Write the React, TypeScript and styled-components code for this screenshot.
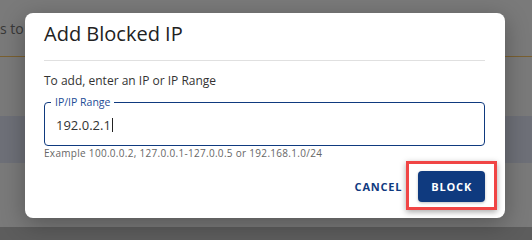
import React from 'react';
import styled, { createGlobalStyle } from 'styled-components';

const GlobalStyle = createGlobalStyle`
  html, body {
    margin: 0;
    padding: 0;
    width: 532px;
    height: 240px;
    overflow: hidden;
    background: #fff;
    font-family: 'Open Sans', 'Noto Sans', sans-serif;
  }
`;

const Page = styled.div`
  position: relative;
  width: 532px;
  height: 240px;
  overflow: hidden;
  background: #fff;
`;

const Intro = styled.div`
  height: 57px;
  padding-top: 19px;
  box-sizing: border-box;
  font-size: 14px;
  line-height: 20px;
  color: #777;
  white-space: nowrap;
  border-bottom: 1px solid #ffc864;
`;

const Row = styled.div<{ h: number; line?: string; band?: boolean; inset?: number }>`
  height: ${({ h }) => h}px;
  background: ${({ band }) => (band ? '#e5ebfa' : 'transparent')};
  box-shadow: ${({ line, inset = 0 }) =>
    line ? `inset ${inset}px -1px 0 0 #fff, inset 0 -1px 0 0 ${line}` : 'none'};
`;

const Footer = styled.div`
  height: 20px;
  background: #c2c2c2;
`;

const Overlay = styled.div`
  position: absolute;
  inset: 0;
  background: rgba(0, 0, 0, 0.52);
  display: flex;
  justify-content: flex-start;
  align-items: flex-start;
  padding: 13px 0 0 25px;
  box-sizing: border-box;
`;

const Dialog = styled.div`
  width: 480px;
  box-sizing: border-box;
  padding: 7px 20px 16px 19px;
  background: #fff;
  border-radius: 8px;
  box-shadow: 0 6px 24px rgba(0, 0, 0, 0.3);
`;

const Title = styled.h2`
  margin: 0;
  font-size: 20px;
  line-height: 28px;
  font-weight: 500;
  color: #222;
`;

const Divider = styled.hr`
  margin: 12px 0 0;
  border: none;
  border-top: 1px solid #e0e0e0;
`;

const Hint = styled.p`
  margin: 12px 0 0;
  font-size: 12px;
  line-height: 16px;
  color: #333;
`;

const Field = styled.div`
  position: relative;
  margin-top: 13px;
  border: 1px solid #0f3a7f;
  border-radius: 4px;
  padding: 13px 11px 11px;
`;

const Label = styled.span`
  position: absolute;
  top: -8px;
  left: 6px;
  padding: 0 4px;
  background: #fff;
  font-size: 10.5px;
  line-height: 14px;
  color: #1d4c96;
`;

const Value = styled.div`
  display: flex;
  align-items: center;
  font-size: 13px;
  line-height: 18px;
  color: #333;
`;

const Caret = styled.span`
  display: inline-block;
  width: 1px;
  height: 14px;
  margin-left: 1px;
  background: #222;
`;

const Helper = styled.div`
  font-size: 10px;
  line-height: 14px;
  letter-spacing: 0.3px;
  color: #666;
`;

const Actions = styled.div`
  display: flex;
  justify-content: flex-end;
  align-items: center;
  gap: 8px;
  margin-top: 11px;
`;

const Button = styled.button<{ primary?: boolean }>`
  height: 31px;
  padding: 0 ${({ primary }) => (primary ? 13 : 8)}px;
  border: none;
  border-radius: 4px;
  background: ${({ primary }) => (primary ? '#0f3a7f' : 'transparent')};
  color: ${({ primary }) => (primary ? '#fff' : '#0f3a7f')};
  font-family: 'Open Sans', 'Noto Sans', sans-serif;
  font-size: 11px;
  font-weight: 700;
  letter-spacing: 0.8px;
  box-shadow: ${({ primary }) => (primary ? '0 1px 3px rgba(0,0,0,0.25)' : 'none')};
`;

const Highlight = styled.div`
  position: absolute;
  left: 406px;
  top: 161px;
  width: 91px;
  height: 49px;
  box-sizing: border-box;
  border: 3px solid #f04545;
  box-shadow: 0 2px 6px rgba(0, 0, 0, 0.35);
  pointer-events: none;
`;

export default function App() {
  return (
    <Page>
      <GlobalStyle />
      <Intro>s to t</Intro>
      <Row h={14} line="#d0d0d0" inset={300} />
      <Row h={31} line="#d0d0d0" inset={300} />
      <Row h={14} />
      <Row h={47} band />
      <Row h={43} line="#c6c6c6" />
      <Row h={21} line="#8e8e8e" />
      <Footer />
      <Overlay>
        <Dialog>
          <Title>Add Blocked IP</Title>
          <Divider />
          <Hint>To add, enter an IP or IP Range</Hint>
          <Field>
            <Label>IP/IP Range</Label>
            <Value>
              192.0.2.1
              <Caret />
            </Value>
          </Field>
          <Helper>Example 100.0.0.2, 127.0.0.1-127.0.0.5 or 192.168.1.0/24</Helper>
          <Actions>
            <Button>CANCEL</Button>
            <Button primary>BLOCK</Button>
          </Actions>
        </Dialog>
      </Overlay>
      <Highlight />
    </Page>
  );
}
